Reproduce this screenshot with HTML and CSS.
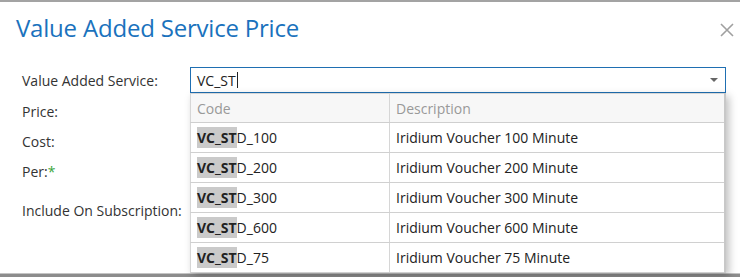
FILE: index.html
```html
<!DOCTYPE html>
<html lang="en">

<head>
    <meta charset="UTF-8">
    <title>Value Added Service Price</title>
    <link rel="stylesheet" href="styles.css">
</head>

<body>
    <div class="dialog">
        <div class="dialog-header">
            <h1 class="dialog-title">Value Added Service Price</h1>
            <svg class="dialog-close" width="14" height="14" viewBox="0 0 14 14">
                <path d="M1 1 L13 13 M13 1 L1 13" stroke="#a0a0a0" stroke-width="1.6" fill="none" />
            </svg>
        </div>

        <div class="dialog-body">
            <div class="form-row row-service">
                <label class="form-label">Value Added Service:</label>
                <div class="combo">
                    <div class="combo-input">
                        <span class="combo-text">VC_ST</span><span class="caret"></span>
                        <span class="combo-arrow"></span>
                    </div>

                    <div class="combo-list">
                        <table class="combo-table">
                            <thead>
                                <tr>
                                    <th class="col-code">Code</th>
                                    <th>Description</th>
                                </tr>
                            </thead>
                            <tbody>
                                <tr>
                                    <td><mark>VC_ST</mark>D_100</td>
                                    <td>Iridium Voucher 100 Minute</td>
                                </tr>
                                <tr>
                                    <td><mark>VC_ST</mark>D_200</td>
                                    <td>Iridium Voucher 200 Minute</td>
                                </tr>
                                <tr>
                                    <td><mark>VC_ST</mark>D_300</td>
                                    <td>Iridium Voucher 300 Minute</td>
                                </tr>
                                <tr>
                                    <td><mark>VC_ST</mark>D_600</td>
                                    <td>Iridium Voucher 600 Minute</td>
                                </tr>
                                <tr>
                                    <td><mark>VC_ST</mark>D_75</td>
                                    <td>Iridium Voucher 75 Minute</td>
                                </tr>
                            </tbody>
                        </table>
                    </div>
                </div>
            </div>

            <div class="form-row row-price">
                <label class="form-label">Price:</label>
            </div>
            <div class="form-row">
                <label class="form-label">Cost:</label>
            </div>
            <div class="form-row">
                <label class="form-label">Per:<span class="required">*</span></label>
            </div>
            <div class="form-row row-include">
                <label class="form-label">Include On Subscription:</label>
            </div>
        </div>

        <div class="dialog-footer"></div>
    </div>
</body>

</html>
```

FILE: styles.css
```css
body {
    margin: 0;
    padding: 0;
    width: 740px;
    height: 277px;
    overflow: hidden;
    background: #fff;
    font-family: "Open Sans", "Noto Sans", sans-serif;
    color: #333;
}

.dialog {
    height: 277px;
    border-top: 2px solid #a3a3a3;
    box-sizing: border-box;
    display: flex;
    flex-direction: column;
}

.dialog-header {
    display: flex;
    align-items: flex-start;
    justify-content: space-between;
    padding: 9px 6px 0 16px;
    height: 46px;
    box-sizing: border-box;
}

.dialog-title {
    margin: 0;
    font-size: 24px;
    line-height: 33px;
    font-weight: normal;
    color: #1a72bd;
    letter-spacing: -0.2px;
}

.dialog-close {
    margin-top: 12px;
}

.dialog-body {
    flex: 1;
    padding: 19px 14px 0 22px;
    font-size: 14px;
}

.form-row {
    display: flex;
    align-items: center;
    height: 30px;
}

.row-service {
    height: 26px;
    margin-bottom: 3px;
}

.row-include {
    height: 48px;
}

.form-label {
    width: 168px;
    flex-shrink: 0;
}

.required {
    color: #3aa63a;
}

.combo {
    position: relative;
    flex: 1;
    height: 26px;
}

.combo-input {
    height: 26px;
    box-sizing: border-box;
    border: 1px solid #1f6fb2;
    padding: 0 6px;
    display: flex;
    align-items: center;
}

.combo-text {
    color: #222;
}

.caret {
    width: 1px;
    height: 16px;
    background: #222;
    margin-left: 1px;
}

.combo-arrow {
    margin-left: auto;
    width: 0;
    height: 0;
    border-left: 4px solid transparent;
    border-right: 4px solid transparent;
    border-top: 4px solid #666;
    margin-right: 1px;
}

.combo-list {
    position: absolute;
    top: 26px;
    left: 0;
    right: 0;
    background: #fff;
    border-right: 2px solid #c8c8c8;
    box-shadow: 3px 3px 8px rgba(0, 0, 0, 0.25);
    z-index: 2;
}

.combo-table {
    width: 100%;
    border-collapse: collapse;
    font-size: 14px;
}

.combo-table th {
    height: 28px;
    background: #f7f7f7;
    color: #999;
    font-weight: normal;
    text-align: left;
    padding: 0 8px 0 6px;
    border-top: 1px solid #d6d6d6;
    border-bottom: 1px solid #cfcfcf;
    border-left: 1px solid #d6d6d6;
}

.combo-table th.col-code {
    width: 184px;
}

.combo-table td {
    height: 29px;
    padding: 0 8px 0 6px;
    border-bottom: 1px solid #d0d0d0;
    border-left: 1px solid #d6d6d6;
    color: #222;
}

.combo-table mark {
    background: #cacaca;
    color: #222;
    font-weight: bold;
    padding: 1px 0;
}

.dialog-footer {
    height: 3px;
    background: #8c8c8c;
    border-top: 1px solid #c4c4c4;
}
```
